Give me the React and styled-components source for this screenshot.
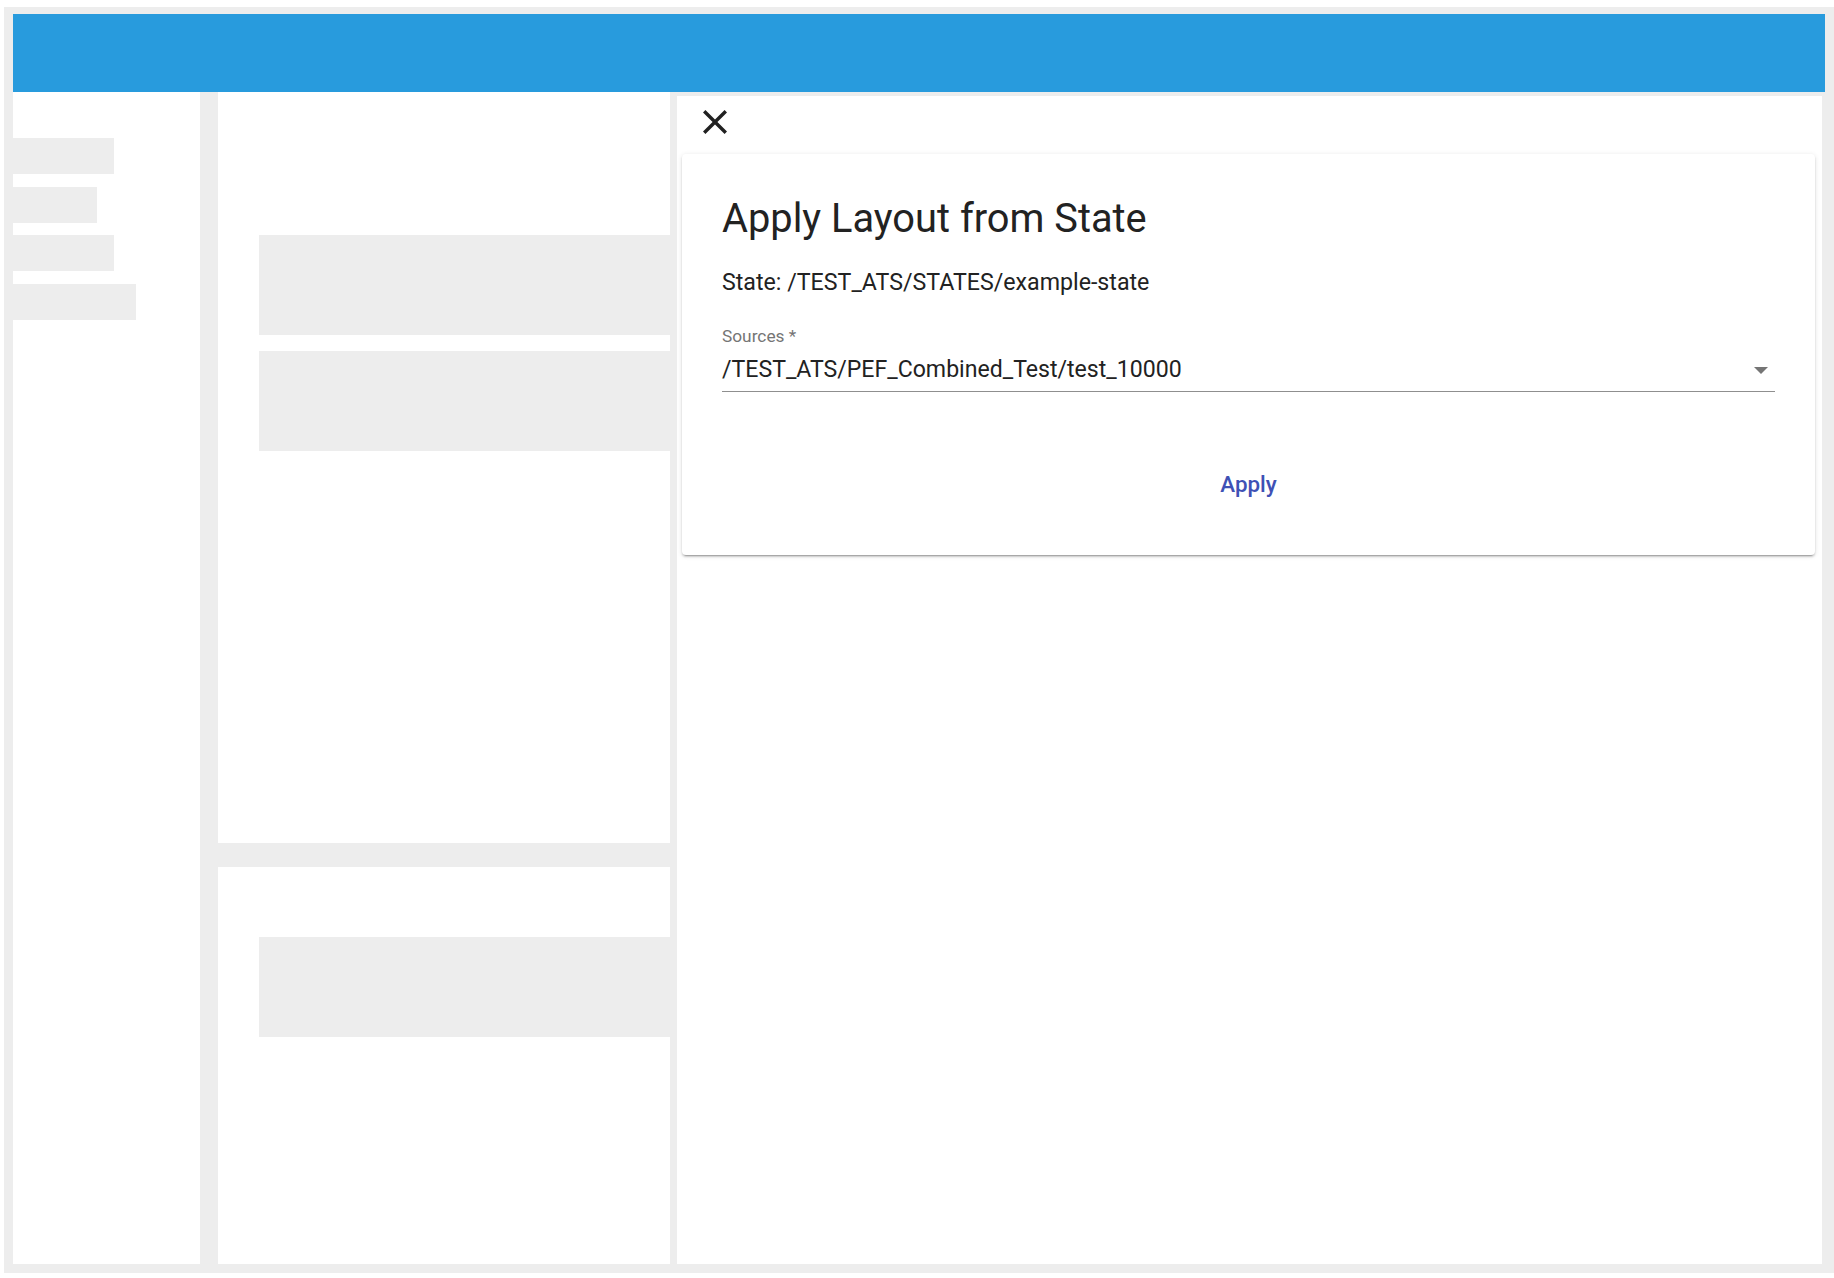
import React from "react";
import styled, { createGlobalStyle } from "styled-components";

const GlobalStyle = createGlobalStyle`
  html, body {
    margin: 0;
    padding: 0;
    background: #ffffff;
    font-family: Roboto, "Liberation Sans", Arial, sans-serif;
  }
`;

const Frame = styled.div`
  box-sizing: border-box;
  width: 1830px;
  height: 1266px;
  margin: 7px 0 0 4px;
  padding: 7px 9px 9px 9px;
  background: #ededed;
  display: flex;
  flex-direction: column;
`;

const TopBar = styled.header`
  height: 78px;
  flex: none;
  background: #289bdd;
`;

const Content = styled.div`
  flex: 1;
  display: flex;
  min-height: 0;
`;

const Sidebar = styled.nav`
  width: 187px;
  flex: none;
  background: #ffffff;
  padding-top: 46px;
  display: flex;
  flex-direction: column;
  gap: 12.5px;
  box-sizing: border-box;
`;

const SideItem = styled.div`
  height: 36px;
  width: ${(p) => p.$width}px;
  background: #ededed;
`;

const MiddleColumn = styled.div`
  width: 452px;
  flex: none;
  margin-left: 18px;
  display: flex;
  flex-direction: column;
  gap: 24px;
`;

const Section = styled.section`
  background: #ffffff;
  box-sizing: border-box;
  padding: ${(p) => p.$top}px 0 0 41px;
  display: flex;
  flex-direction: column;
  gap: 16px;
  height: ${(p) => (p.$height ? `${p.$height}px` : "auto")};
  flex: ${(p) => (p.$height ? "none" : "1")};
`;

const Block = styled.div`
  height: 100px;
  background: #ededed;
`;

const Panel = styled.main`
  flex: 1;
  margin: 4px 3px 0 7px;
  background: #ffffff;
  padding: 14px 7px 0 5px;
  box-sizing: border-box;
`;

const CloseButton = styled.button`
  display: block;
  border: 0;
  background: none;
  padding: 0;
  margin-left: 21px;
  width: 24px;
  height: 24px;
  color: #212121;
  cursor: pointer;

  svg {
    display: block;
  }
`;

const Card = styled.div`
  margin-top: 20px;
  height: 401px;
  box-sizing: border-box;
  padding: 42px 40px 0 40px;
  background: #ffffff;
  border-radius: 4px;
  box-shadow: 0px 3px 1px -2px rgba(0, 0, 0, 0.2),
    0px 2px 2px 0px rgba(0, 0, 0, 0.14), 0px 1px 5px 0px rgba(0, 0, 0, 0.12);
  display: flex;
  flex-direction: column;
`;

const Title = styled.h2`
  margin: 0;
  font-size: 39.8px;
  line-height: 46px;
  font-weight: 400;
  color: #222222;
`;

const StateText = styled.p`
  margin: 23px 0 0;
  font-size: 23.2px;
  line-height: 34px;
  color: #222222;
`;

const Field = styled.div`
  margin-top: 29px;
  display: flex;
  flex-direction: column;
`;

const Label = styled.label`
  font-size: 17.3px;
  line-height: 17px;
  color: #757575;
`;

const SelectBox = styled.div`
  margin-top: 10px;
  display: flex;
  align-items: center;
  justify-content: space-between;
  padding-bottom: 6px;
  border-bottom: 1.5px solid #8f8f8f;
`;

const SelectValue = styled.span`
  font-size: 23.1px;
  line-height: 30px;
  color: #222222;
`;

const Arrow = styled.span`
  width: 0;
  height: 0;
  margin-right: 7px;
  border-left: 7.5px solid transparent;
  border-right: 7.5px solid transparent;
  border-top: 7.5px solid #757575;
`;

const Actions = styled.div`
  margin-top: 77px;
  display: flex;
  justify-content: center;
`;

const TextButton = styled.button`
  border: 0;
  background: none;
  padding: 0 8px;
  font-family: inherit;
  font-size: 22.4px;
  line-height: 30px;
  font-weight: 500;
  color: #3f51b5;
  cursor: pointer;
`;

const CloseIcon = () => (
  <svg width="24" height="24" viewBox="5 5 14 14" fill="currentColor">
    <path d="M19 6.41L17.59 5 12 10.59 6.41 5 5 6.41 10.59 12 5 17.59 6.41 19 12 13.41 17.59 19 19 17.59 13.41 12z" />
  </svg>
);

const sideWidths = [101, 84, 101, 123];

export default function App() {
  return (
    <>
      <GlobalStyle />
      <Frame>
        <TopBar />
        <Content>
          <Sidebar>
            {sideWidths.map((w, i) => (
              <SideItem key={i} $width={w} />
            ))}
          </Sidebar>
          <MiddleColumn>
            <Section $top={143} $height={751}>
              <Block />
              <Block />
            </Section>
            <Section $top={70}>
              <Block />
            </Section>
          </MiddleColumn>
          <Panel>
            <CloseButton aria-label="close">
              <CloseIcon />
            </CloseButton>
            <Card>
              <Title>Apply Layout from State</Title>
              <StateText>State: /TEST_ATS/STATES/example-state</StateText>
              <Field>
                <Label>Sources *</Label>
                <SelectBox>
                  <SelectValue>/TEST_ATS/PEF_Combined_Test/test_10000</SelectValue>
                  <Arrow />
                </SelectBox>
              </Field>
              <Actions>
                <TextButton>Apply</TextButton>
              </Actions>
            </Card>
          </Panel>
        </Content>
      </Frame>
    </>
  );
}
